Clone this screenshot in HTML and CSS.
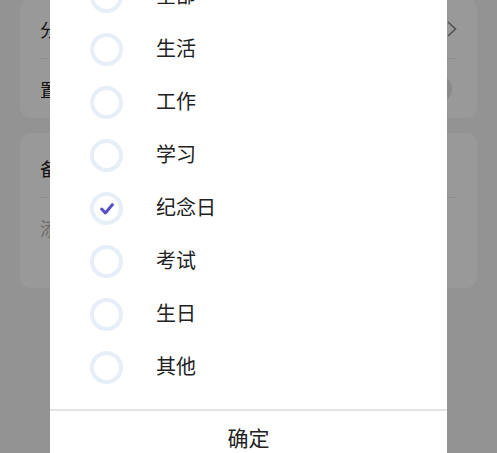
FILE: index.html
```html
<!DOCTYPE html>
<html lang="zh-CN">
<head>
<meta charset="utf-8">
<title>选择分类</title>
<link rel="stylesheet" href="styles.css">
</head>
<body>
<div class="page">
  <section class="card card-a">
    <div class="row">
      <span class="label">分类</span>
      <span class="value">
        <span class="value-text">纪念日</span>
        <svg class="chevron" width="10" height="16" viewBox="0 0 10 16"><path d="M1 1 L8.5 8 L1 15" fill="none" stroke="#888" stroke-width="1.6"/></svg>
      </span>
    </div>
    <div class="sep"></div>
    <div class="row">
      <span class="label">置顶</span>
      <span class="switch"><span class="knob"></span></span>
    </div>
  </section>
  <section class="card card-b">
    <div class="note-head">备注</div>
    <div class="sep"></div>
    <div class="note-body">添加备注...</div>
  </section>
</div>

<div class="mask"></div>

<div class="dialog">
  <ul class="options">
    <li class="option"><span class="radio"></span><span class="opt-text">全部</span></li>
    <li class="option"><span class="radio"></span><span class="opt-text">生活</span></li>
    <li class="option"><span class="radio"></span><span class="opt-text">工作</span></li>
    <li class="option"><span class="radio"></span><span class="opt-text">学习</span></li>
    <li class="option"><span class="radio checked"><svg width="14" height="12" viewBox="0 0 14 12"><path d="M1.7 6 L5.4 10 L12.3 1.7" fill="none" stroke="#5a50c8" stroke-width="3" stroke-linecap="round" stroke-linejoin="round"/></svg></span><span class="opt-text">纪念日</span></li>
    <li class="option"><span class="radio"></span><span class="opt-text">考试</span></li>
    <li class="option"><span class="radio"></span><span class="opt-text">生日</span></li>
    <li class="option"><span class="radio"></span><span class="opt-text">其他</span></li>
  </ul>
  <div class="footer">
    <button class="confirm">确定</button>
  </div>
</div>
</body>
</html>
```

FILE: styles.css
```css
* { box-sizing: border-box; }

html, body {
  margin: 0;
  padding: 0;
  width: 497px;
  height: 453px;
  overflow: hidden;
}

body {
  background: #f5f5f5;
  font-family: "Noto Sans CJK SC", "Noto Sans", sans-serif;
  color: #222;
  position: relative;
}

.page {
  padding: 0 20px;
  display: flex;
  flex-direction: column;
  gap: 15px;
  margin-top: -1px;
}

.card {
  background: #fff;
  border-radius: 10px;
  padding: 0 20px;
}

.row {
  height: 59px;
  display: flex;
  align-items: center;
  justify-content: space-between;
  font-size: 18px;
  color: #222;
}

.sep {
  height: 1px;
  background: #eeeeee;
}

.value {
  display: flex;
  align-items: center;
  gap: 8px;
  color: #888;
}

.chevron { display: block; }

.switch {
  width: 48px;
  height: 28px;
  border-radius: 14px;
  background: #e6e6e6;
  margin-right: 5px;
  padding: 2px;
  display: flex;
}

.knob {
  width: 24px;
  height: 24px;
  border-radius: 50%;
  background: #fff;
}

.card-b {
  padding-bottom: 45px;
}

.note-head {
  padding: 20px 0 14px;
  line-height: 30px;
  font-size: 18px;
  color: #222;
}

.note-body {
  padding-top: 15px;
  line-height: 30px;
  font-size: 18px;
  color: #b5b5b5;
}

.mask {
  position: absolute;
  inset: 0;
  background: rgba(0, 0, 0, 0.4);
}

.dialog {
  position: absolute;
  left: 50px;
  top: -30px;
  width: 397px;
  background: #fff;
  border-radius: 12px;
}

.options {
  list-style: none;
  margin: 0;
  padding: 0 0 15px;
}

.option {
  height: 53px;
  display: flex;
  align-items: center;
  padding-left: 40px;
  gap: 33px;
}

.radio {
  width: 33px;
  height: 33px;
  border: 4px solid #e6eef8;
  border-radius: 50%;
  display: flex;
  align-items: center;
  justify-content: center;
  flex: none;
}

.radio svg { display: block; margin-left: 1px; }

.opt-text {
  font-size: 20px;
  color: #222;
  line-height: 28px;
  padding-bottom: 3px;
}

.footer {
  border-top: 2px solid #e4e4e4;
}

.confirm {
  display: block;
  width: 100%;
  height: 56px;
  border: 0;
  background: transparent;
  font-family: "Noto Sans CJK SC", "Noto Sans", sans-serif;
  font-size: 21px;
  color: #222;
  padding: 0 0 4px;
}
```
